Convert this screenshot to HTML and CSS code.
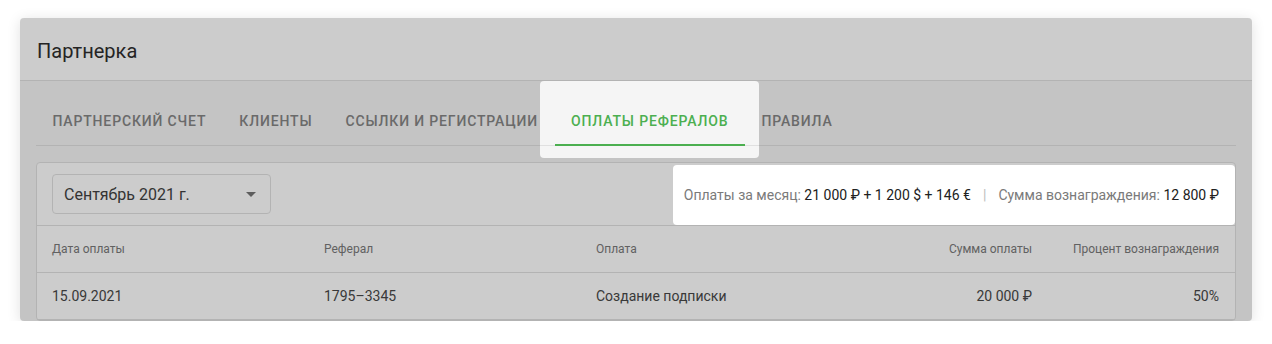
FILE: index.html
```html
<!DOCTYPE html>
<html lang="ru">
<head>
    <meta charset="UTF-8">
    <meta name="viewport" content="width=device-width, initial-scale=1.0">
    <title>Партнерка</title>
    <link rel="stylesheet" href="styles.css">
</head>
<body>
    <div class="card tour">
        <header class="card-header">
            <h1>Партнерка</h1>
        </header>

        <div class="card-body">
            <nav class="tabs">
                <div class="tab">Партнерский счет</div>
                <div class="tab">Клиенты</div>
                <div class="tab">Ссылки и регистрации</div>
                <div class="tab active spot">Оплаты рефералов</div>
                <div class="tab">Правила</div>
            </nav>

            <div class="table-card">
                <div class="toolbar">
                    <div class="select">
                        <span>Сентябрь 2021 г.</span>
                        <span class="select-arrow"></span>
                    </div>
                    <div class="summary spot">
                        <span class="label">Оплаты за месяц:</span>&nbsp;<span class="value">21 000 ₽ + 1 200 $ + 146 €</span>
                        <span class="sep">|</span>
                        <span class="label">Сумма вознаграждения:</span>&nbsp;<span class="value">12 800 ₽</span>
                    </div>
                </div>

                <div class="table">
                    <div class="th">Дата оплаты</div>
                    <div class="th">Реферал</div>
                    <div class="th">Оплата</div>
                    <div class="th right">Сумма оплаты</div>
                    <div class="th right">Процент вознаграждения</div>

                    <div class="td">15.09.2021</div>
                    <div class="td">1795–3345</div>
                    <div class="td">Создание подписки</div>
                    <div class="td right">20 000 ₽</div>
                    <div class="td right">50%</div>
                </div>
            </div>
        </div>
    </div>
</body>
</html>
```

FILE: styles.css
```css
body {
    margin: 0;
    padding: 18px 20px 0;
    background-color: #fff;
    font-family: Roboto, 'Liberation Sans', sans-serif;
    color: #424242;
}
.card {
    position: relative;
    isolation: isolate;
    height: 303px;
    overflow: hidden;
    background-color: #f5f5f5;
    border-radius: 4px;
    box-shadow: 0 2px 14px rgba(0, 0, 0, 0.12);
}
/* dimmed layer of the tour, spots sit above it */
.tour::after {
    content: "";
    position: absolute;
    inset: 0;
    z-index: 1;
    background-color: rgba(0, 0, 0, 0.2);
}
.spot {
    position: relative;
    z-index: 2;
}
.card-header {
    display: flex;
    align-items: center;
    box-sizing: border-box;
    height: 63px;
    padding: 3px 17px 0;
    background-color: #fff;
    border-bottom: 1px solid #e0e0e0;
}
.card-header h1 {
    margin: 0;
    font-size: 20px;
    font-weight: 400;
    color: #2e2e2e;
}
.card-body {
    padding: 16px;
}
.tabs {
    display: flex;
    margin-bottom: 16px;
    border-bottom: 1px solid #e0e0e0;
}
.tab {
    display: flex;
    align-items: center;
    height: 48px;
    padding: 0 16.5px;
    font-size: 14px;
    font-weight: 500;
    letter-spacing: 0.85px;
    text-transform: uppercase;
    color: #858585;
}
.tab.active {
    color: #4caf50;
}
.tab.active::before {
    content: "";
    position: absolute;
    inset: -16px -14px -13px -15px;
    z-index: -1;
    border-radius: 4px;
    background: linear-gradient(#e0e0e0, #e0e0e0) no-repeat 0 64px / 100% 1px, #f5f5f5;
}
.tab.active::after {
    content: "";
    position: absolute;
    left: 0;
    right: 0;
    bottom: -1px;
    height: 2px;
    background-color: #4caf50;
}
.table-card {
    background-color: #fff;
    border: 1px solid #e0e0e0;
    border-radius: 4px;
}
.toolbar {
    display: flex;
    justify-content: space-between;
    align-items: center;
    padding: 11px 16px 11px 15px;
    border-bottom: 1px solid #e0e0e0;
}
.select {
    display: flex;
    justify-content: space-between;
    align-items: center;
    box-sizing: border-box;
    width: 219px;
    height: 40px;
    padding: 0 14px 0 11px;
    border: 1px solid #e0e0e0;
    border-radius: 4px;
    font-size: 16px;
    color: #424242;
}
.select-arrow {
    width: 0;
    height: 0;
    border-left: 5px solid transparent;
    border-right: 5px solid transparent;
    border-top: 5px solid #757575;
}
.summary {
    display: flex;
    align-items: center;
    align-self: stretch;
    margin: -9px -16px -11px 0;
    padding: 0 16px 0 11px;
    background-color: #fff;
    border-radius: 4px;
    font-size: 14px;
    white-space: pre;
}
.summary .label {
    color: #7a7a7a;
}
.summary .value {
    color: #212121;
}
.summary .sep {
    margin: 0 12px;
    color: #bdbdbd;
}
.table {
    display: grid;
    grid-template-columns: 272px 272px 272px 195px 1fr;
}
.th, .td {
    display: flex;
    align-items: center;
    padding: 0 16px 0 15px;
    border-bottom: 1px solid #e0e0e0;
}
.th {
    height: 46px;
    font-size: 12px;
    color: #7a7a7a;
}
.td {
    height: 46px;
    font-size: 14px;
    color: #484848;
}
.right {
    justify-content: flex-end;
}
```
